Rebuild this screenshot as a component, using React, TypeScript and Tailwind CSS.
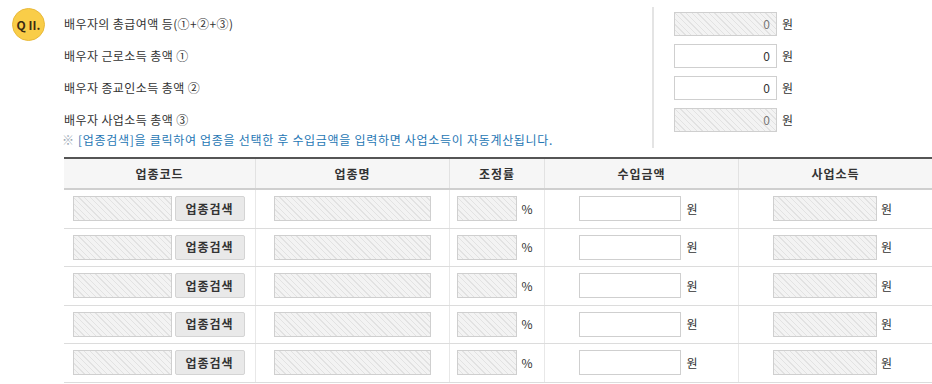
const hatch =
	'bg-[#f3f3f3] bg-[repeating-linear-gradient(45deg,#f3f3f3_0px,#f3f3f3_3px,#e2e2e2_3px,#e2e2e2_4px)]';

function AmountBox({ readOnly }: { readOnly?: boolean }) {
	return (
		<div className="flex items-center gap-[5px]">
			<div
				className={`flex h-[24px] w-[103px] items-center justify-end border border-[#cfcfcf] pr-[6px] text-[12px] ${
					readOnly ? `${hatch} text-[#777]` : 'bg-white text-[#333]'
				}`}
			>
				0
			</div>
			<span className="text-[12px] text-[#333]">원</span>
		</div>
	);
}

function Field({ width, readOnly }: { width: string; readOnly?: boolean }) {
	return <div className={`h-[25px] ${width} border border-[#cfcfcf] ${readOnly ? hatch : 'bg-white'}`} />;
}

const labels = ['배우자의 총급여액 등(①+②+③)', '배우자 근로소득 총액 ①', '배우자 종교인소득 총액 ②', '배우자 사업소득 총액 ③'];

function BusinessRow() {
	return (
		<div className="flex h-[38.5px] border-b border-[#dcdcdc] text-[12px] text-[#333]">
			<div className="flex w-[192px] items-center justify-center gap-[3px] border-r border-[#e8e8e8] pr-[2px]">
				<Field width="w-[99px]" readOnly />
				<button className="h-[25px] w-[70px] rounded-[2px] border border-[#d4d4d4] bg-[#e9e9e9] text-[12px] font-bold tracking-[1px] text-[#333]">
					업종검색
				</button>
			</div>
			<div className="flex w-[194px] items-center justify-center border-r border-[#e8e8e8]">
				<Field width="w-[157px]" readOnly />
			</div>
			<div className="flex w-[95px] items-center justify-center gap-[4px] border-r border-[#e8e8e8] pr-[4px]">
				<Field width="w-[60px]" readOnly />
				<span>%</span>
			</div>
			<div className="flex w-[194px] items-center justify-center gap-[5px] border-r border-[#e8e8e8] pr-[6px]">
				<Field width="w-[102px]" />
				<span>원</span>
			</div>
			<div className="flex flex-1 items-center justify-center gap-[4px] pr-[6px]">
				<Field width="w-[104px]" readOnly />
				<span>원</span>
			</div>
		</div>
	);
}

export default function App() {
	return (
		<div className="h-[384px] w-[932px] overflow-hidden bg-white font-['Noto_Sans_CJK_KR','Noto_Sans',sans-serif]">
			<div className="mt-[7px] flex h-[141px]">
				<div className="w-[64px] pl-[12px] pt-[1px]">
					<div className="flex h-[33px] w-[33px] items-center justify-center rounded-full border border-[#e9b93a] bg-[#f9cd48] text-[12px] font-bold leading-none text-[#3b2a12]">
						Q II.
					</div>
				</div>
				<div className="flex w-[590px] flex-col border-r-2 border-[#e4e4e4] pt-[5px]">
					{labels.map((l) => (
						<div key={l} className="mb-[8px] flex h-[24px] items-center text-[12px] tracking-[0.4px] text-[#333]">
							{l}
						</div>
					))}
					<p className="-mt-[8px] ml-[-2px] text-[12px] leading-[15px] tracking-[0.7px] text-[#2677b4]">
						<span className="text-[#9aa8b4]">※</span> [업종검색]을 클릭하여 업종을 선택한 후 수입금액을 입력하면 사업소득이 자동계산됩니다.
					</p>
				</div>
				<div className="flex flex-col gap-[8px] pl-[20px] pt-[5px]">
					<AmountBox readOnly />
					<AmountBox />
					<AmountBox />
					<AmountBox readOnly />
				</div>
			</div>

			<div className="ml-[64px] mt-[9px] border-t-2 border-[#555]">
				<div className="flex h-[31px] border-b-2 border-[#cfcfcf] bg-[#f6f6f6] text-[12px] font-bold tracking-[1px] text-[#333]">
					<div className="flex w-[192px] items-center justify-center border-r border-[#e2e2e2]">업종코드</div>
					<div className="flex w-[194px] items-center justify-center border-r border-[#e2e2e2]">업종명</div>
					<div className="flex w-[95px] items-center justify-center border-r border-[#e2e2e2]">조정률</div>
					<div className="flex w-[194px] items-center justify-center border-r border-[#e2e2e2]">수입금액</div>
					<div className="flex flex-1 items-center justify-center">사업소득</div>
				</div>
				{[0, 1, 2, 3, 4].map((i) => (
					<BusinessRow key={i} />
				))}
			</div>
		</div>
	);
}
